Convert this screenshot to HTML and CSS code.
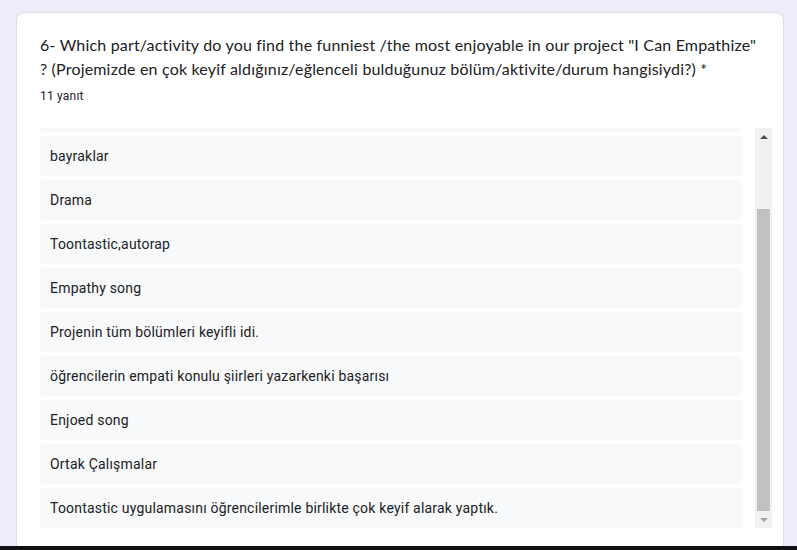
FILE: index.html
```html
<!DOCTYPE html>
<html lang="tr">
<head>
<meta charset="utf-8">
<title>Yanıtlar</title>
<link rel="stylesheet" href="styles.css">
</head>
<body>
<div class="page">
  <section class="card">
    <h2 class="question">6- Which part/activity do you find the funniest /the most enjoyable in our project "I Can Empathize" ? (Projemizde en çok keyif aldığınız/eğlenceli bulduğunuz bölüm/aktivite/durum hangisiydi?) *</h2>
    <div class="count">11 yanıt</div>
    <div class="list-area">
      <div class="scroller">
        <ul class="answers">
          <li class="answer">Hepsi</li>
          <li class="answer">Proje etkinlikleri</li>
          <li class="answer">bayraklar</li>
          <li class="answer">Drama</li>
          <li class="answer">Toontastic,autorap</li>
          <li class="answer">Empathy song</li>
          <li class="answer">Projenin tüm bölümleri keyifli idi.</li>
          <li class="answer">öğrencilerin empati konulu şiirleri yazarkenki başarısı</li>
          <li class="answer">Enjoed song</li>
          <li class="answer">Ortak Çalışmalar</li>
          <li class="answer">Toontastic uygulamasını öğrencilerimle birlikte çok keyif alarak yaptık.</li>
        </ul>
      </div>
      <div class="scrollbar" aria-hidden="true">
        <div class="sb-btn"><span class="arrow up"></span></div>
        <div class="sb-track"><div class="sb-thumb"></div></div>
        <div class="sb-btn"><span class="arrow down"></span></div>
      </div>
    </div>
  </section>
</div>
<div class="bottom-bar"></div>
</body>
</html>
```
FILE: styles.css
```css
* { box-sizing: border-box; }
html, body { margin: 0; padding: 0; }
body {
  background: #f0ebf8;
  width: 797px;
  height: 550px;
  overflow: hidden;
  display: flex;
  flex-direction: column;
}
.page {
  flex: 1;
  overflow: hidden;
  padding: 12px 13px 0 16px;
}
.card {
  background: #fff;
  border: 1px solid #dadce0;
  border-radius: 8px;
  height: 600px;
  padding: 20px 0 0 23px;
}
.question {
  margin: 0;
  font-family: Lato, sans-serif;
  font-weight: 400;
  font-size: 16px;
  line-height: 24px;
  letter-spacing: 0.18px;
  color: #202124;
  width: 722px;
}
.count {
  margin-top: 7px;
  font-family: Roboto, sans-serif;
  font-size: 12px;
  line-height: 16px;
  letter-spacing: 0.2px;
  color: #202124;
}
.list-area {
  margin-top: 24px;
  width: 732px;
  height: 400px;
  display: flex;
  gap: 12px;
}
.scroller {
  flex: 1;
  height: 400px;
  overflow-y: scroll;
  scrollbar-width: none;
  display: flex;
  flex-direction: column-reverse;
}
.scroller::-webkit-scrollbar { display: none; }
.answers {
  list-style: none;
  margin: 0;
  padding: 0;
  display: flex;
  flex-direction: column;
  gap: 4px;
}
.answer {
  background: #f8f9fa;
  border-radius: 4px;
  height: 40px;
  flex: none;
  display: flex;
  align-items: center;
  padding-left: 10px;
  padding-bottom: 1px;
  font-family: Roboto, sans-serif;
  font-size: 14px;
  letter-spacing: 0.2px;
  color: #202124;
}
.scrollbar {
  width: 17px;
  flex: none;
  background: #f1f1f1;
  display: flex;
  flex-direction: column;
}
.sb-btn {
  height: 17px;
  flex: none;
  display: flex;
  align-items: center;
  justify-content: center;
}
.arrow {
  width: 0;
  height: 0;
  border-left: 4px solid transparent;
  border-right: 4px solid transparent;
}
.arrow.up { border-bottom: 4px solid #505050; }
.arrow.down { border-top: 4px solid #a3a3a3; }
.sb-track {
  flex: 1;
  display: flex;
  flex-direction: column;
  justify-content: flex-end;
  padding: 0 2px;
}
.sb-thumb {
  height: 302px;
  background: #c1c1c1;
}
.bottom-bar {
  height: 4px;
  background: #111;
  flex: none;
}
```
